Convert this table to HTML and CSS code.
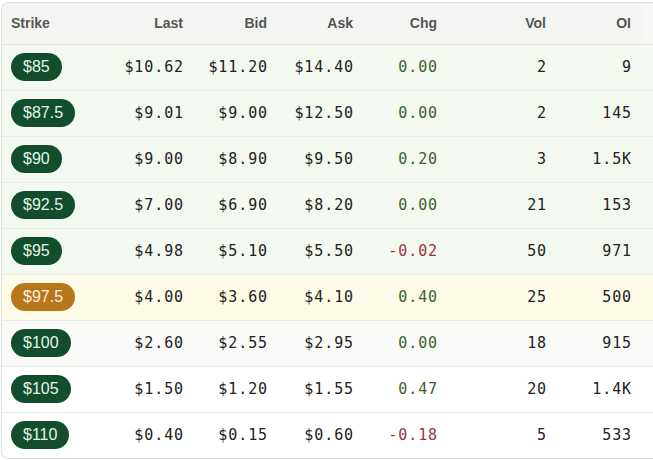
FILE: index.html
```html
<!DOCTYPE html>
<html>
<head>
<meta charset="utf-8">
<link rel="stylesheet" href="styles.css">
</head>
<body>
<div class="wrap">
<table class="chain">
  <colgroup>
    <col class="c-strike"><col class="c-last"><col class="c-bid"><col class="c-ask"><col class="c-chg"><col class="c-vol"><col class="c-oi"><col class="c-extra">
  </colgroup>
  <thead>
    <tr><th class="left">Strike</th><th>Last</th><th>Bid</th><th>Ask</th><th>Chg</th><th>Vol</th><th>OI</th><th></th></tr>
  </thead>
  <tbody>
    <tr class="itm"><td class="left"><span class="pill">$85</span></td><td>$10.62</td><td>$11.20</td><td>$14.40</td><td class="up">0.00</td><td>2</td><td>9</td><td></td></tr>
    <tr class="itm"><td class="left"><span class="pill">$87.5</span></td><td>$9.01</td><td>$9.00</td><td>$12.50</td><td class="up">0.00</td><td>2</td><td>145</td><td></td></tr>
    <tr class="itm"><td class="left"><span class="pill">$90</span></td><td>$9.00</td><td>$8.90</td><td>$9.50</td><td class="up">0.20</td><td>3</td><td>1.5K</td><td></td></tr>
    <tr class="itm"><td class="left"><span class="pill">$92.5</span></td><td>$7.00</td><td>$6.90</td><td>$8.20</td><td class="up">0.00</td><td>21</td><td>153</td><td></td></tr>
    <tr class="itm"><td class="left"><span class="pill">$95</span></td><td>$4.98</td><td>$5.10</td><td>$5.50</td><td class="down">-0.02</td><td>50</td><td>971</td><td></td></tr>
    <tr class="atm"><td class="left"><span class="pill pill-atm">$97.5</span></td><td>$4.00</td><td>$3.60</td><td>$4.10</td><td class="up">0.40</td><td>25</td><td>500</td><td></td></tr>
    <tr class="otm-near"><td class="left"><span class="pill">$100</span></td><td>$2.60</td><td>$2.55</td><td>$2.95</td><td class="up">0.00</td><td>18</td><td>915</td><td></td></tr>
    <tr><td class="left"><span class="pill">$105</span></td><td>$1.50</td><td>$1.20</td><td>$1.55</td><td class="up">0.47</td><td>20</td><td>1.4K</td><td></td></tr>
    <tr><td class="left"><span class="pill">$110</span></td><td>$0.40</td><td>$0.15</td><td>$0.60</td><td class="down">-0.18</td><td>5</td><td>533</td><td></td></tr>
  </tbody>
</table>
</div>
</body>
</html>
```

FILE: styles.css
```css
html, body {
  margin: 0;
  padding: 0;
  background: #ffffff;
  overflow: hidden;
}

.wrap {
  margin: 2px 0 0 1px;
  width: 652px;
  border: 1px solid #dcdedb;
  border-right: none;
  border-radius: 8px 0 0 8px;
  overflow: hidden;
  background: #ffffff;
  box-sizing: border-box;
}

.chain {
  border-collapse: collapse;
  table-layout: fixed;
  width: 651px;
}

.c-strike { width: 97px; }
.c-last { width: 96px; }
.c-bid { width: 84px; }
.c-ask { width: 86px; }
.c-chg { width: 84px; }
.c-vol { width: 109px; }
.c-oi { width: 85px; }
.c-extra { width: 10px; }

thead th {
  height: 41px;
  padding: 0 12px 0 0;
  background: #f4f5f3;
  border-bottom: 1px solid #dfe2dd;
  font-family: "Liberation Sans", Arial, sans-serif;
  font-weight: bold;
  font-size: 14px;
  color: #555555;
  text-align: right;
  box-sizing: border-box;
}

thead th:last-child {
  padding: 0;
  background: #f6f7f5;
}

th.left, td.left {
  text-align: left;
  padding-left: 9px;
}

tbody td {
  height: 46px;
  padding: 0 11px 0 0;
  border-bottom: 1px solid #e8ebe6;
  font-family: "DejaVu Sans Mono", "Liberation Mono", monospace;
  font-size: 15px;
  letter-spacing: 0.9px;
  color: #222222;
  text-align: right;
  box-sizing: border-box;
}

tbody td:last-child {
  padding: 0;
}

tbody tr:last-child td {
  border-bottom: none;
}

tr.itm td { background: #f3f8f0; }
tr.atm td { background: #fefbe8; }
tr.otm-near td { background: #fafbf9; }

td.up { color: #3e6228; }
td.down { color: #a23340; }

.pill {
  display: inline-block;
  padding: 5px 12px;
  border-radius: 14px;
  background: #124d2e;
  color: #e3f6e6;
  font-family: "Liberation Sans", Arial, sans-serif;
  font-size: 16px;
  letter-spacing: 0;
  line-height: 18px;
}

.pill-atm {
  background: #b8761b;
  color: #fdf3df;
}
```
